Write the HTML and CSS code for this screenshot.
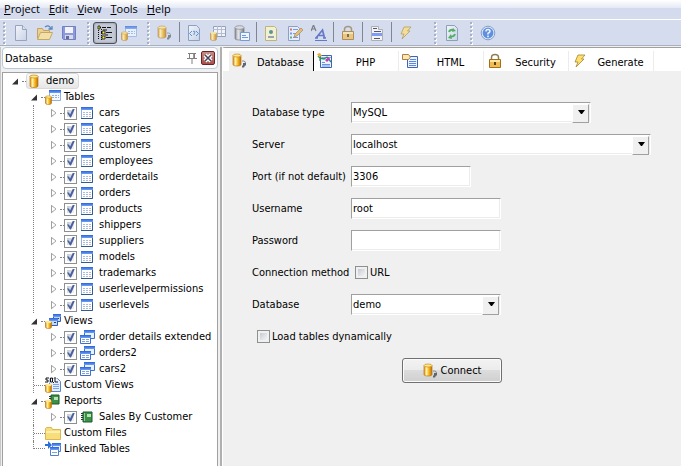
FILE: index.html
```
<!DOCTYPE html>
<html lang="en">

<head>
    <meta charset="utf-8">
    <meta name="viewport" content="width=device-width, initial-scale=1">
    <title>demo - Database</title>
    <link rel="stylesheet" href="styles.css">
</head>

<body>
    <!-- icon set -->
    <svg class="sprite" aria-hidden="true">
        <defs>
            <linearGradient id="gold"><stop offset="0" stop-color="#d98e10"/><stop offset=".3" stop-color="#fff3b0"/><stop offset=".6" stop-color="#f8b920"/><stop offset="1" stop-color="#b86c08"/></linearGradient>
            <linearGradient id="blue" x2="0" y2="1"><stop offset="0" stop-color="#2a62d8"/><stop offset="1" stop-color="#6ea2f6"/></linearGradient>
            <linearGradient id="steel"><stop offset="0" stop-color="#666"/><stop offset=".35" stop-color="#eee"/><stop offset="1" stop-color="#555"/></linearGradient>
            <linearGradient id="paper" x2="1" y2="1"><stop offset="0" stop-color="#fff"/><stop offset="1" stop-color="#c4cfe4"/></linearGradient>
        </defs>
        <symbol id="cyl" viewBox="0 0 16 16"><path d="M3 3v10c0 2 8 2 8 0V3z" fill="url(#gold)" stroke="#b97a14" stroke-width=".7"/><ellipse cx="7" cy="3.500" rx="4" ry="1.500" fill="#ffe98c" stroke="#c98b1c" stroke-width=".7"/></symbol>
        <symbol id="plug" viewBox="0 0 16 16"><path d="M1 2.500v9c0 2 8 2 8 0v-9z" fill="url(#gold)" stroke="#b97a14" stroke-width=".7"/><ellipse cx="5" cy="2.500" rx="4" ry="1.500" fill="#ffe98c" stroke="#c98b1c" stroke-width=".7"/><path d="M10 8h1.500q2 0 2 2" fill="none" stroke="#888"/><path d="M11 10h3v2.500h-1l-1 2h-2v-2h1z" fill="#5a6672"/></symbol>
        <symbol id="table" viewBox="0 0 16 16"><path d="M2.500 2.500h11v11h-11z" fill="#fff" stroke="#8fb0e6"/><path d="M2 2h12v3H2z" fill="url(#blue)"/><path d="M13.500 5v8.500H2" fill="none" stroke="#35598f"/><path d="M4 7.500h8M4 9.500h8M4 11.500h8" stroke="#a9bcda" stroke-dasharray="2 1"/></symbol>
        <symbol id="tables" viewBox="0 0 16 16"><path d="M4.500 1.500h11v10h-11z" fill="#f4f9ff" stroke="#8fb0e6"/><path d="M4 1h12v3H4z" fill="url(#blue)"/><path d="M7 6.500h7M7 8.500h7" stroke="#8eaee0" stroke-dasharray="2 1"/><path d="M0.500 8v6c0 2 6 2 6 0V8z" fill="url(#gold)" stroke="#b97a14" stroke-width=".7"/><ellipse cx="3.500" cy="8" rx="3" ry="1.200" fill="#ffe98c" stroke="#c98b1c" stroke-width=".6"/></symbol>
        <symbol id="view" viewBox="0 0 16 16"><path d="M5.500 1.500h10v8h-10z" fill="#e8f2ff" stroke="#3f6fc6"/><path d="M5 1h11v3H5z" fill="url(#blue)"/><path d="M1.500 6.500h10v8h-10z" fill="#fff" stroke="#3f6fc6"/><path d="M1 6h11v3H1z" fill="url(#blue)"/><path d="M3 10.500h7M3 12.500h7" stroke="#7fa4dc" stroke-dasharray="3 1"/></symbol>
        <symbol id="views" viewBox="0 0 16 16"><path d="M8.500 1.500h7v7h-7z" fill="#c4d8f6" stroke="#315fb5"/><path d="M8 1h8v3H8z" fill="url(#blue)"/><path d="M4.500 5.500h8v7h-8z" fill="#c4d8f6" stroke="#315fb5"/><path d="M4 5h9v3H4z" fill="url(#blue)"/><path d="M9 9.500h2M13 5.500h1" stroke="#345"/><path d="M.5 9v5c0 2 6 2 6 0V9z" fill="url(#gold)" stroke="#b97a14" stroke-width=".7"/><ellipse cx="3.500" cy="9" rx="3" ry="1.200" fill="#ffe98c"/></symbol>
        <symbol id="sql" viewBox="0 0 16 16"><path d="M4.500 1.500h8l3 3v10h-11z" fill="#e3edff" stroke="#5c83cb"/><path d="M8 7.500h6M8 9.500h6M8 11.500h6" stroke="#7fa4e6"/><path d="M0 0h12v6H0z" fill="#fff" opacity=".6"/><path d="M4 1H1v2h2v2H0M5.500 1h2v4h-2zM7 4l2 2M10 0v5h3" fill="none" stroke="#111"/><path d="M.5 8v6c0 2 6 2 6 0V8z" fill="url(#gold)" stroke="#b97a14" stroke-width=".7"/><ellipse cx="3.500" cy="8" rx="3" ry="1.200" fill="#ffe98c"/></symbol>
        <symbol id="book" viewBox="0 0 16 16"><path d="M4 3h9v10H4z" fill="#3c9048" stroke="#1d5a28"/><path d="M5 4h1v8H5z" fill="#8ed196"/><path d="M8 5h4v3H8z" fill="#b9e4b4"/><path d="M2 4.500h2M2 6.500h2M2 8.500h2M2 10.500h2" stroke="#333"/></symbol>
        <symbol id="reports" viewBox="0 0 16 16"><path d="M6 2h8v9H6z" fill="#3c9048" stroke="#1d5a28"/><path d="M9 4h4v3H9z" fill="#b9e4b4"/><path d="M4 3.500h2M4 5.500h2" stroke="#333"/><path d="M.5 8v6c0 2 6 2 6 0V8z" fill="url(#gold)" stroke="#b97a14" stroke-width=".7"/><ellipse cx="3.500" cy="8" rx="3" ry="1.200" fill="#ffe98c"/></symbol>
        <symbol id="folder" viewBox="0 0 16 16"><path d="M.5 3.500l1-1h5l1 2h8v10H.5z" fill="#f8dd7c" stroke="#dcb650"/><path d="M1 6h14v2H1z" fill="#fff0ab"/></symbol>
        <symbol id="linked" viewBox="0 0 16 16"><path d="M7.500 2.500h8v8h-8z" fill="#e8f2ff" stroke="#4d7ed0"/><path d="M7 2h9v3H7z" fill="url(#blue)"/><path d="M5.500 6.500h8v8h-8z" fill="#fff" stroke="#4d7ed0"/><path d="M5 6h9v3H5z" fill="url(#blue)"/><path d="M7 11.500h5" stroke="#7fa4dc"/><path d="M0 3h3V0l4 4-4 4V5H0z" fill="#2c6fda"/></symbol>
        <symbol id="new" viewBox="0 0 16 16"><path d="M2.500 .5h7l4 4v11h-11z" fill="url(#paper)" stroke="#7d8da8"/><path d="M9.500 .5v4h4" fill="#dde5f2" stroke="#7d8da8"/></symbol>
        <symbol id="open" viewBox="0 0 16 16"><path d="M.5 13.500v-10h5l1 2h6v2" fill="#f6cf6a" stroke="#bf8a28"/><path d="M.5 14.500l3-7h12l-3 7z" fill="#ffe38c" stroke="#c4902c"/><path d="M8 2c3-2 5-1 6 2M11.500 4H15V1" fill="none" stroke="#2460a8" stroke-width="1.300"/></symbol>
        <symbol id="save" viewBox="0 0 16 16"><path d="M1.500 1.500h13v13h-12l-1-1z" fill="#6f7ed8" stroke="#4a58ae"/><path d="M4 2h8v6H4z" fill="#fff"/><path d="M4 10h8v4H4z" fill="#d9d9df"/><path d="M5 11h3v3H5z" fill="#333a78"/></symbol>
        <symbol id="tree" viewBox="0 0 16 16"><path d="M1.500 1v13M1 2.500h3M4 7.500h3M4 12.500h3M4.500 4v11" stroke="#111" stroke-dasharray="1 1"/><path d="M5 2.500h4M10 2.500h4M9 7.500h6M9 12.500h6M6 5h4M8 10h3" stroke="#111"/><path d="M1 1h2v3H1zM5 6h3v3H5zM5 11h3v3H5z" fill="#fbe83c" stroke="#111" stroke-width=".8"/></symbol>
        <symbol id="code" viewBox="0 0 16 16"><path d="M2.500 .5h8l3 3v12h-11z" fill="url(#paper)" stroke="#6e87b0"/><path d="M6 6L3.500 8.500 6 11M10 6l2.500 2.500L10 11M7 6.500q2-1 2 .5L8 9v1" fill="none" stroke="#2878d0"/></symbol>
        <symbol id="grid" viewBox="0 0 16 16"><path d="M3.500 1.500h12v10h-12z" fill="#fff" stroke="#7889a4"/><path d="M3 4.500h12M3 8.500h12M7.500 1v10M11.500 1v10" stroke="#a6b2c6"/><path d="M.5 8v6c0 2 6 2 6 0V8z" fill="url(#gold)" stroke="#b97a14" stroke-width=".7"/><ellipse cx="3.500" cy="8" rx="3" ry="1.200" fill="#ffe98c"/></symbol>
        <symbol id="dbform" viewBox="0 0 16 16"><path d="M1 2.500v11c0 2 9 2 9 0v-11z" fill="url(#steel)" stroke="#555" stroke-width=".7"/><ellipse cx="5.500" cy="2.500" rx="4.500" ry="1.800" fill="#ddd" stroke="#666" stroke-width=".7"/><path d="M6.500 7.500h9v8h-9z" fill="#fff" stroke="#4e80cc"/><path d="M8 10.500h4M8 12.500h6" stroke="#3e7de0"/></symbol>
        <symbol id="picture" viewBox="0 0 16 16"><path d="M2.500 1.500h9l2 2v12h-11z" fill="#fff9c4" stroke="#b7a54a"/><path d="M5 13v-2h6v2z" fill="#7a8c9a"/><circle cx="8" cy="7" r="2" fill="#267c6a"/></symbol>
        <symbol id="edit" viewBox="0 0 16 16"><path d="M1.500 1.500h9l2 2v12h-11z" fill="#eef3ff" stroke="#6c87b8"/><path d="M3 4.500h2" stroke="#d84a3a" stroke-width="2"/><path d="M3 8.500h2" stroke="#5a7be0" stroke-width="2"/><path d="M3 12.500h2" stroke="#3aa04a" stroke-width="2"/><path d="M6 4.500h5M6 8.500h5M6 12.500h5" stroke="#4a80d8"/><path d="M7 12l1-3 6-6 2 2-6 6z" fill="#e9b14a" stroke="#98671c" stroke-width=".7"/></symbol>
        <symbol id="fonts" viewBox="0 0 16 16"><path d="M0 6l2.500-6L5 6M1 4h3" fill="none" stroke="#555" stroke-width="1.200"/><path d="M5 13l6.500-8 2 8M7 10.500h6M4 13h3M12 13h3" fill="none" stroke="#3350b8" stroke-width="1.700"/><path d="M4 15.500h12" stroke="#3350b8"/></symbol>
        <symbol id="lock" viewBox="0 0 16 16"><path d="M4.500 7V4.500q0-3 3.500-3t3.500 3V7" fill="none" stroke="#8c7c58" stroke-width="1.500"/><path d="M2.500 6.500h11v8h-11z" fill="#f2bc54" stroke="#a06e1c"/><path d="M3 7h10v2H3z" fill="#ffe6a0"/><path d="M7 9h2v3H7z" fill="#5a4010"/></symbol>
        <symbol id="list" viewBox="0 0 16 16"><path d="M2.500 1.500h7v3h4v11h-11z" fill="#fff" stroke="#9d9d9d"/><path d="M4 3.500h4M5 6.500h7M5 13.500h6" stroke="#222"/><path d="M3 8h10v3H3z" fill="#5c80f4"/></symbol>
        <symbol id="bolt" viewBox="0 0 16 16"><path d="M6 2h7L9.500 6H12l-8 8 2-5H3z" fill="#ffdf6e" stroke="#a8842c" stroke-width=".8"/></symbol>
        <symbol id="refresh" viewBox="0 0 16 16"><path d="M2.500 .5h8l3 3v12h-11z" fill="url(#paper)" stroke="#6e87a0"/><path d="M5 7q1-3 5-2M11 9q-1 3-5 2.500" fill="none" stroke="#18a028" stroke-width="1.800"/><path d="M9 3l3 3-4 1zM7 9l-3 4 4 1z" fill="#18a028"/></symbol>
        <symbol id="help" viewBox="0 0 16 16"><circle cx="8" cy="8" r="6.800" fill="#e4eeff" stroke="#6386c0"/><circle cx="8" cy="8" r="5.400" fill="#2f6fda"/><path d="M6 6.500q0-2 2-2t2 1.800q0 1-2 2V9.500M8 10.500v1.700" fill="none" stroke="#fff" stroke-width="1.500"/></symbol>
        <symbol id="php" viewBox="0 0 16 16"><path d="M3.500 2.500h11v12h-11z" fill="#eef4ff" stroke="#3c66b4"/><path d="M5 4.500h9" stroke="#8fb0e6"/><path d="M5 9.500h3M5 11.500h8M5 13h8" stroke="#6c94dc"/><path d="M1 3l2 2v3M3 5l4 1 3-2 4 5" fill="none" stroke="#2a9068" stroke-width="1.300"/><path d="M8 7l4-3 1 2-3 3z" fill="#c63ac0"/><path d="M0 1l3-1 2 3-3 1z" fill="#e3ae3a"/></symbol>
        <symbol id="html" viewBox="0 0 16 16"><path d="M5.500 3.500h10v11h-10z" fill="#eef4ff" stroke="#3c66b4"/><path d="M8 6.500h6M7 8.500h7M7 10.500h7M7 12.500h7" stroke="#5c88dc"/><path d="M.5 1.500h6l2 2.500-2 2.500h-6z" fill="#ffe6ad" stroke="#a68148"/></symbol>
        <symbol id="pin" viewBox="0 0 12 12"><path d="M2 1.500h8M3.500 2v4M8.500 2v4M1 6.500h10M6 7v5" fill="none" stroke="#808080"/><path d="M7 2h1v4H7z" fill="#999"/></symbol>
    </svg>

    <nav class="menubar">
        <a href="#"><u>P</u>roject</a>
        <a href="#"><u>E</u>dit</a>
        <a href="#"><u>V</u>iew</a>
        <a href="#"><u>T</u>ools</a>
        <a href="#"><u>H</u>elp</a>
    </nav>

    <div class="toolbar">
        <div class="group">
            <button title="New"><svg><use href="#new"/></svg></button>
            <button title="Open"><svg><use href="#open"/></svg></button>
            <button title="Save"><svg><use href="#save"/></svg></button>
        </div>
        <div class="group">
            <button class="pressed" title="Database pane"><svg><use href="#tree"/></svg></button>
            <button title="Tables"><svg><use href="#tables"/></svg></button>
        </div>
        <div class="group long">
            <button title="Connect"><svg><use href="#plug"/></svg></button>
            <span class="sep"></span>
            <button title="Custom view"><svg><use href="#code"/></svg></button>
            <button title="Edit table"><svg><use href="#grid"/></svg></button>
            <button title="Linked database"><svg><use href="#dbform"/></svg></button>
            <span class="sep"></span>
            <button title="Report"><svg><use href="#picture"/></svg></button>
            <button title="Edit"><svg><use href="#edit"/></svg></button>
            <button title="Fonts"><svg><use href="#fonts"/></svg></button>
            <span class="sep"></span>
            <button title="Security"><svg><use href="#lock"/></svg></button>
            <span class="sep"></span>
            <button title="Menu editor"><svg><use href="#list"/></svg></button>
            <span class="sep"></span>
            <button title="Generate"><svg><use href="#bolt"/></svg></button>
        </div>
        <div class="group">
            <button title="Synchronize"><svg><use href="#refresh"/></svg></button>
        </div>
        <div class="group">
            <button title="Help"><svg><use href="#help"/></svg></button>
        </div>
    </div>

    <div class="workspace">
        <aside class="sidebar">
            <div class="pane-title">
                <span>Database</span>
                <button class="pin" title="Auto hide"><svg><use href="#pin"/></svg></button>
                <button class="close" title="Close"><svg viewBox="0 0 12 12"><path d="M3 3l6 6M9 3L3 9" stroke="#fff" stroke-width="4"/><path d="M3 3l6 6M9 3L3 9" stroke="#445" stroke-width="1.500"/></svg></button>
            </div>
            <ul class="tree">
                <li>
                    <div class="row"><i class="arrow open"></i><i class="dots"></i><span class="selected"><svg><use href="#cyl"/></svg>demo</span></div>
                    <ul>
                        <li>
                            <div class="row"><i class="arrow open"></i><i class="dots"></i><svg><use href="#tables"/></svg>Tables</div>
                            <ul class="items">
                                <li><label class="row"><i class="arrow"></i><i class="dots"></i><input type="checkbox" checked><svg><use href="#table"/></svg>cars</label></li>
                                <li><label class="row"><i class="arrow"></i><i class="dots"></i><input type="checkbox" checked><svg><use href="#table"/></svg>categories</label></li>
                                <li><label class="row"><i class="arrow"></i><i class="dots"></i><input type="checkbox" checked><svg><use href="#table"/></svg>customers</label></li>
                                <li><label class="row"><i class="arrow"></i><i class="dots"></i><input type="checkbox" checked><svg><use href="#table"/></svg>employees</label></li>
                                <li><label class="row"><i class="arrow"></i><i class="dots"></i><input type="checkbox" checked><svg><use href="#table"/></svg>orderdetails</label></li>
                                <li><label class="row"><i class="arrow"></i><i class="dots"></i><input type="checkbox" checked><svg><use href="#table"/></svg>orders</label></li>
                                <li><label class="row"><i class="arrow"></i><i class="dots"></i><input type="checkbox" checked><svg><use href="#table"/></svg>products</label></li>
                                <li><label class="row"><i class="arrow"></i><i class="dots"></i><input type="checkbox" checked><svg><use href="#table"/></svg>shippers</label></li>
                                <li><label class="row"><i class="arrow"></i><i class="dots"></i><input type="checkbox" checked><svg><use href="#table"/></svg>suppliers</label></li>
                                <li><label class="row"><i class="arrow"></i><i class="dots"></i><input type="checkbox" checked><svg><use href="#table"/></svg>models</label></li>
                                <li><label class="row"><i class="arrow"></i><i class="dots"></i><input type="checkbox" checked><svg><use href="#table"/></svg>trademarks</label></li>
                                <li><label class="row"><i class="arrow"></i><i class="dots"></i><input type="checkbox" checked><svg><use href="#table"/></svg>userlevelpermissions</label></li>
                                <li><label class="row"><i class="arrow"></i><i class="dots"></i><input type="checkbox" checked><svg><use href="#table"/></svg>userlevels</label></li>
                            </ul>
                        </li>
                        <li>
                            <div class="row"><i class="arrow open"></i><i class="dots"></i><svg><use href="#views"/></svg>Views</div>
                            <ul class="items">
                                <li><label class="row"><i class="arrow"></i><i class="dots"></i><input type="checkbox" checked><svg><use href="#view"/></svg>order details extended</label></li>
                                <li><label class="row"><i class="arrow"></i><i class="dots"></i><input type="checkbox" checked><svg><use href="#view"/></svg>orders2</label></li>
                                <li><label class="row"><i class="arrow"></i><i class="dots"></i><input type="checkbox" checked><svg><use href="#view"/></svg>cars2</label></li>
                            </ul>
                        </li>
                        <li><div class="row"><i class="leaf"></i><svg><use href="#sql"/></svg>Custom Views</div></li>
                        <li>
                            <div class="row"><i class="arrow open"></i><i class="dots"></i><svg><use href="#reports"/></svg>Reports</div>
                            <ul class="items">
                                <li><label class="row"><i class="arrow"></i><i class="dots"></i><input type="checkbox" checked><svg><use href="#book"/></svg>Sales By Customer</label></li>
                            </ul>
                        </li>
                        <li><div class="row"><i class="leaf"></i><svg><use href="#folder"/></svg>Custom Files</div></li>
                        <li><div class="row"><i class="leaf last"></i><svg><use href="#linked"/></svg>Linked Tables</div></li>
                    </ul>
                </li>
            </ul>
        </aside>

        <main class="content">
            <div class="tabs">
                <button class="tab active"><svg><use href="#plug"/></svg><span>Database</span></button>
                <button class="tab"><svg><use href="#php"/></svg><span>PHP</span></button>
                <button class="tab"><svg><use href="#html"/></svg><span>HTML</span></button>
                <button class="tab"><svg><use href="#lock"/></svg><span>Security</span></button>
                <button class="tab"><svg><use href="#bolt"/></svg><span>Generate</span></button>
            </div>
            <form class="settings">
                <label for="dbtype">Database type</label>
                <div class="combo medium"><select id="dbtype"><option>MySQL</option></select></div>

                <label for="server">Server</label>
                <div class="combo large"><select id="server"><option>localhost</option></select></div>

                <label for="port">Port (if not default)</label>
                <input class="port" type="text" id="port" value="3306">

                <label for="username">Username</label>
                <input type="text" id="username" value="root">

                <label for="password">Password</label>
                <input type="password" id="password">

                <span>Connection method</span>
                <label class="check"><input type="checkbox" id="url">URL</label>

                <label for="database">Database</label>
                <div class="combo"><select id="database"><option>demo</option></select></div>

                <label class="check wide"><input type="checkbox" id="dynamic">Load tables dynamically</label>

                <button class="connect" type="button"><svg><use href="#plug"/></svg>Connect</button>
            </form>
        </main>
    </div>
</body>

</html>
```
FILE: styles.css
```
* {
    box-sizing: border-box;
}

body {
    margin: 0;
    min-height: 100vh;
    display: flex;
    flex-direction: column;
    background: #f0f0f0;
    color: #000;
    font-family: "DejaVu Sans Condensed", Tahoma, sans-serif;
    font-size: 11px;
    line-height: 16px;
}

button,
input,
select {
    font: inherit;
    color: inherit;
    margin: 0;
    padding: 0;
}

button {
    border: 0;
    background: none;
}

svg {
    width: 16px;
    height: 16px;
    flex: none;
    display: block;
}

.sprite {
    position: absolute;
    width: 0;
    height: 0;
}

/* menu and toolbar */

.menubar {
    display: flex;
    gap: 9px;
    height: 19px;
    padding-left: 4px;
    background: linear-gradient(#fff, #e6eaf5 40%, #d3daed 45%, #d5dcee);
    font-family: "Open Sans", "Segoe UI", sans-serif;
    font-size: 11px;
    line-height: 18px;
}

.menubar a {
    color: #000;
    text-decoration: none;
}

.toolbar {
    display: flex;
    height: 27px;
    padding-top: 2px;
    background: #d5dcee;
    border-top: 1px solid #fff;
    border-bottom: 1px solid #a9b0c0;
}

.group {
    display: flex;
    padding: 0 3px 0 9px;
    background:
        linear-gradient(#a8b0c4 2px, transparent 2px) 3px 0 / 2px 4px repeat-y,
        linear-gradient(transparent 1px, #fff 1px, #fff 3px, transparent 3px) 4px 0 / 2px 4px repeat-y;
}

.group.long {
    padding-right: 13px;
}

.group button {
    width: 24px;
    height: 22px;
    padding: 3px 4px;
}

.group svg {
    opacity: 0.7;
}

.group .pressed {
    border: 1px solid #4b4f58;
    border-radius: 3px;
    padding: 2px 3px;
    background: #c3c8d6;
    box-shadow: inset 0 0 2px #777;
}

.group .pressed svg {
    opacity: 1;
}

.sep {
    width: 5px;
    height: 20px;
    border-left: 2px solid transparent;
    background: linear-gradient(90deg, #7f8592 1px, transparent 1px) no-repeat;
}

/* database pane */

.workspace {
    flex: 1;
    display: flex;
    padding-top: 1px;
}

.sidebar {
    flex: none;
    width: 222px;
    display: flex;
    flex-direction: column;
    gap: 3px;
    padding: 0 2px 0 1px;
    border-left: 1px solid #c8c8c8;
    border-right: 2px solid #b0b0b0;
}

.pane-title {
    display: flex;
    align-items: center;
    height: 22px;
    padding: 0 2px;
    border: 1px solid #b9c9da;
    border-radius: 4px;
    background: #fff;
}

.pane-title span {
    flex: 1;
    padding-top: 1px;
}

.pin svg {
    width: 12px;
    height: 12px;
}

.close {
    width: 14px;
    height: 14px;
    margin-left: 3px;
    border: 1px solid #6c2323;
    border-radius: 2px;
    background: linear-gradient(#c98a86, #a8504c);
}

.close svg {
    width: 12px;
    height: 12px;
}

.tree {
    flex: 1;
    padding: 0 0 0 6px;
    border: 1px solid #a0a0a0;
    border-bottom: 0;
    background: #fff;
}

.tree,
.tree ul {
    margin: 0;
    list-style: none;
}

.tree ul {
    padding-left: 19px;
}

.tree .items {
    margin-left: 5px;
    padding-left: 13px;
    border-left: 1px dotted #808080;
}

.row {
    display: flex;
    align-items: center;
    height: 16px;
    line-height: 18px;
    white-space: nowrap;
}

.row svg {
    margin-right: 3px;
}

.row input + svg {
    margin: 0 4px 0 2px;
}

.arrow {
    width: 12px;
    height: 9px;
    background: #a0a0a0;
    clip-path: polygon(evenodd, 4px 0, 9px 4px, 9px 5px, 4px 9px, 4px 0, 5px 2px, 5px 7px, 8px 5px, 8px 4px, 5px 2px);
}

.arrow.open {
    background: #333;
    clip-path: polygon(9px 2px, 9px 8px, 3px 8px);
}

.dots {
    width: 4px;
    margin-left: 1px;
    border-top: 1px dotted #808080;
}

.leaf {
    width: 12px;
    height: 16px;
    margin-left: 5px;
    border-left: 1px dotted #808080;
    background: repeating-linear-gradient(90deg, #808080 0 1px, transparent 1px 2px) 0 8px / 100% 1px no-repeat;
}

.leaf.last {
    height: 8px;
    align-self: flex-start;
    background-position: 0 7px;
}

.selected {
    display: flex;
    align-items: center;
    height: 16px;
    padding-right: 4px;
    border: 1px solid #d9d9d9;
    border-radius: 3px;
    background: linear-gradient(#fafafa, #e6e6e6);
}

/* form controls */

input[type="checkbox"] {
    appearance: none;
    flex: none;
    width: 13px;
    height: 13px;
    border: 1px solid #8e8f8f;
    background: linear-gradient(135deg, #c6cbd4, #f4f4f4) content-box #fff;
    padding: 2px;
}

input[type="checkbox"]:checked::before {
    content: "";
    display: block;
    width: 9px;
    height: 9px;
    margin: -1px 0 0 0;
    background: #4a5f9e;
    clip-path: polygon(0 4px, 2px 4px, 3px 6px, 6px 0, 8px 0, 4px 9px, 3px 9px);
}

input[type="text"],
input[type="password"],
select {
    appearance: none;
    width: 150px;
    height: 21px;
    padding: 0 1px;
    border: 1px solid;
    border-color: #a0a0a0 #fff #fff #a0a0a0;
    border-radius: 0;
    outline: 0;
    background: #fff;
    box-shadow: inset -1px -1px #ececec;
}

input.port {
    width: 120px;
}

.combo {
    position: relative;
    width: 150px;
}

.combo.medium {
    width: 240px;
}

.combo.large {
    width: 300px;
}

.combo select {
    width: 100%;
    display: block;
}

.combo::before {
    content: "";
    position: absolute;
    top: 2px;
    right: 2px;
    width: 15px;
    height: 17px;
    border: 1px solid;
    border-color: #fff #a0a0a0 #a0a0a0 #fff;
    background: #f0f0f0;
    pointer-events: none;
}

.combo::after {
    content: "";
    position: absolute;
    top: 8px;
    right: 6px;
    width: 7px;
    height: 4px;
    background: #000;
    clip-path: polygon(0 0, 100% 0, 4px 100%, 3px 100%);
    pointer-events: none;
}

/* main area */

.content {
    flex: 1;
    min-width: 0;
    border-top: 1px solid #a0a0a0;
    border-left: 1px solid #fff;
    border-top-left-radius: 3px;
}

.tabs {
    display: flex;
    height: 23px;
    padding: 3px 0 0 6px;
    background: #fff;
}

.tab {
    display: flex;
    width: 85px;
    padding: 0 0 0 3px;
    border-right: 1px solid #ececec;
}

.tab span {
    flex: 1;
    padding-top: 4px;
    text-align: center;
}

.tab.active {
    background: #f0f0f0;
    border-right-color: #000;
}

.tab svg {
    margin-top: 2px;
}

.settings {
    display: grid;
    grid-template-columns: 99px 1fr;
    grid-auto-rows: 21px;
    row-gap: 11px;
    align-items: center;
    padding: 31px 20px 20px 29px;
    white-space: nowrap;
}

.check {
    display: flex;
    align-items: center;
    gap: 2px;
    padding-left: 4px;
}

.check.wide {
    grid-column: 1 / 3;
    padding-left: 5px;
}

.connect {
    grid-column: 2;
    align-self: start;
    display: flex;
    align-items: center;
    justify-content: center;
    gap: 2px;
    width: 100px;
    height: 25px;
    margin-left: 51px;
    border: 1px solid #707070;
    border-radius: 3px;
    background: linear-gradient(#f3f3f3, #ebebeb 50%, #dcdcdc 50%, #cfcfcf);
    box-shadow: inset 0 0 0 1px #fbfbfb;
}
```
